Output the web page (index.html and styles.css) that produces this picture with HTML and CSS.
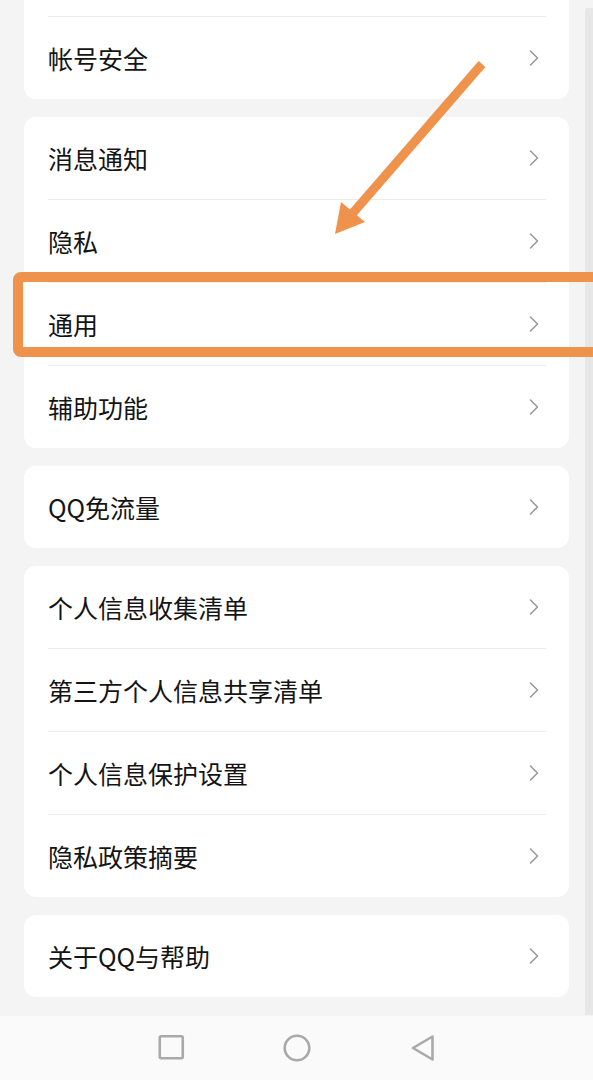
FILE: index.html
```html
<!DOCTYPE html>
<html lang="zh-CN">
<head>
<meta charset="utf-8">
<title>设置</title>
<link rel="stylesheet" href="styles.css">
</head>
<body>
<div class="page">
  <div class="content">
    <div class="list">
      <div class="card cut">
        <div class="row partial"></div>
        <div class="row"><span class="label">帐号安全</span><svg class="chev" viewBox="0 0 10 16"><polyline points="1.5,1 8.5,8 1.5,15"/></svg></div>
      </div>
      <div class="card">
        <div class="row"><span class="label">消息通知</span><svg class="chev" viewBox="0 0 10 16"><polyline points="1.5,1 8.5,8 1.5,15"/></svg></div>
        <div class="row"><span class="label">隐私</span><svg class="chev" viewBox="0 0 10 16"><polyline points="1.5,1 8.5,8 1.5,15"/></svg></div>
        <div class="row"><span class="label">通用</span><svg class="chev" viewBox="0 0 10 16"><polyline points="1.5,1 8.5,8 1.5,15"/></svg></div>
        <div class="row"><span class="label">辅助功能</span><svg class="chev" viewBox="0 0 10 16"><polyline points="1.5,1 8.5,8 1.5,15"/></svg></div>
      </div>
      <div class="card">
        <div class="row"><span class="label">QQ免流量</span><svg class="chev" viewBox="0 0 10 16"><polyline points="1.5,1 8.5,8 1.5,15"/></svg></div>
      </div>
      <div class="card">
        <div class="row"><span class="label">个人信息收集清单</span><svg class="chev" viewBox="0 0 10 16"><polyline points="1.5,1 8.5,8 1.5,15"/></svg></div>
        <div class="row"><span class="label">第三方个人信息共享清单</span><svg class="chev" viewBox="0 0 10 16"><polyline points="1.5,1 8.5,8 1.5,15"/></svg></div>
        <div class="row"><span class="label">个人信息保护设置</span><svg class="chev" viewBox="0 0 10 16"><polyline points="1.5,1 8.5,8 1.5,15"/></svg></div>
        <div class="row"><span class="label">隐私政策摘要</span><svg class="chev" viewBox="0 0 10 16"><polyline points="1.5,1 8.5,8 1.5,15"/></svg></div>
      </div>
      <div class="card">
        <div class="row"><span class="label">关于QQ与帮助</span><svg class="chev" viewBox="0 0 10 16"><polyline points="1.5,1 8.5,8 1.5,15"/></svg></div>
      </div>
    </div>
    <div class="scrollbar"></div>
  </div>
  <nav class="navbar">
    <svg class="nav-icon" viewBox="0 0 30 30"><rect x="3.75" y="3.25" width="23" height="22" rx="1.5"/></svg>
    <svg class="nav-icon" viewBox="0 0 30 30"><circle cx="15" cy="15" r="12.3"/></svg>
    <svg class="nav-icon" viewBox="0 0 30 30"><path d="M24.5 3.5 L5 15 L24.5 26.5 Z"/></svg>
  </nav>
  <svg class="annot" viewBox="0 0 593 1080">
    <line x1="482" y1="64" x2="352" y2="214"/>
    <polygon points="335,234 341,202 365,222"/>
    <rect x="18" y="277" width="580" height="75" rx="3"/>
  </svg>
</div>
</body>
</html>
```
FILE: styles.css
```css
* { box-sizing: border-box; }
html, body { margin: 0; padding: 0; }
body {
  width: 593px;
  height: 1080px;
  background: #f4f4f4;
  font-family: "Noto Sans CJK SC", "Noto Sans", sans-serif;
  color: #141414;
  overflow: hidden;
}
.page {
  position: relative;
  width: 593px;
  height: 1080px;
  display: flex;
  flex-direction: column;
}
.content {
  height: 1016px;
  display: flex;
  overflow: hidden;
}
.list {
  margin-left: 24px;
  width: 545px;
  display: flex;
  flex-direction: column;
  gap: 18px;
}
.card {
  background: #ffffff;
  border-radius: 12px;
  padding: 0 23px 0 24px;
}
.card.cut {
  border-radius: 0 0 12px 12px;
}
.row {
  height: 82px;
  display: flex;
  align-items: center;
  justify-content: space-between;
  box-sizing: content-box;
}
.row + .row {
  border-top: 1px solid #ececec;
}
.row.partial {
  height: 16px;
}
.label {
  font-size: 25px;
  line-height: 1;
  letter-spacing: 0;
}
.chev {
  width: 10px;
  height: 16px;
  margin-right: 7px;
  fill: none;
  stroke: #9a9a9a;
  stroke-width: 1.6;
  stroke-linecap: round;
  stroke-linejoin: round;
}
.scrollbar {
  margin-left: auto;
  margin-top: 8px;
  width: 8px;
  height: 1007px;
  background: #e7e7e7;
  border-radius: 2px 0 0 0;
}
.navbar {
  height: 64px;
  background: #fafafa;
  display: flex;
  justify-content: center;
  align-items: center;
  gap: 96px;
  padding-top: 0;
}
.nav-icon {
  width: 30px;
  height: 30px;
  fill: none;
  stroke: #a9a9a9;
  stroke-width: 2.6;
  stroke-linejoin: round;
}
.annot {
  position: absolute;
  left: 0;
  top: 0;
  width: 593px;
  height: 1080px;
  pointer-events: none;
}
.annot line {
  stroke: #ef924c;
  stroke-width: 9;
}
.annot polygon {
  fill: #ef924c;
}
.annot rect {
  fill: none;
  stroke: #ef924c;
  stroke-width: 10;
}
```
